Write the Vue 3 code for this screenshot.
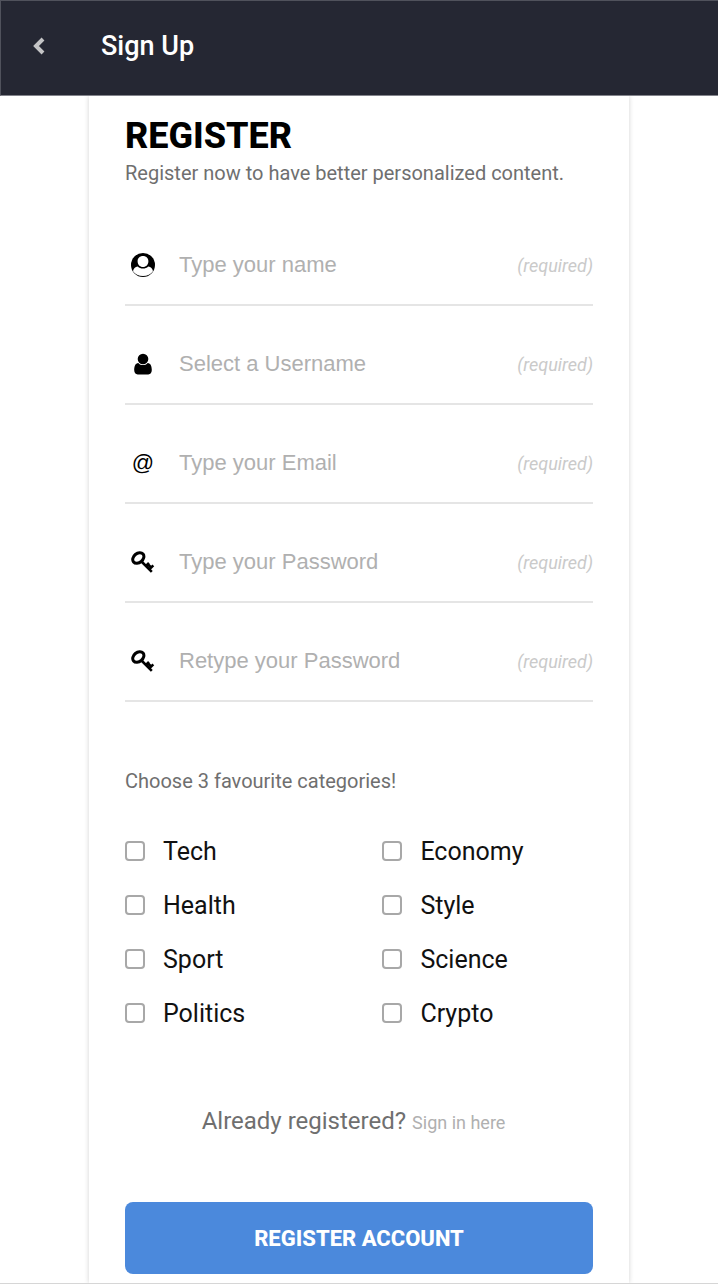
<script setup>
import { reactive } from 'vue'

const fields = [
  { id: 'name', icon: 'circle', placeholder: 'Type your name', type: 'text' },
  { id: 'username', icon: 'user', placeholder: 'Select a Username', type: 'text' },
  { id: 'email', icon: 'at', placeholder: 'Type your Email', type: 'email' },
  { id: 'password', icon: 'key', placeholder: 'Type your Password', type: 'password' },
  { id: 'password2', icon: 'key', placeholder: 'Retype your Password', type: 'password' },
]
const form = reactive({ name: '', username: '', email: '', password: '', password2: '' })
const categories = ['Tech', 'Economy', 'Health', 'Style', 'Sport', 'Science', 'Politics', 'Crypto']
</script>

<template>
  <div class="page">
    <header class="topbar">
      <button class="back" type="button" aria-label="Back">
        <svg viewBox="0 0 12 18" width="12" height="18"><path d="M10 2 3 9l7 7" fill="none" stroke="currentColor" stroke-width="4" /></svg>
      </button>
      <span class="title">Sign Up</span>
    </header>

    <main class="card">
      <form @submit.prevent>
        <h1>REGISTER</h1>
        <p class="note">Register now to have better personalized content.</p>

        <div class="fields">
          <div v-for="f in fields" :key="f.id" class="field">
            <label class="icon" :for="f.id" :aria-label="f.placeholder">
              <svg v-if="f.icon === 'circle'" viewBox="0 0 24 24" width="24" height="24">
                <circle cx="12" cy="12" r="12" />
                <path fill="#fff" d="M12 3C8.800 3 6.600 5.200 6.600 8.200c0 3.300 2.200 5.800 5.400 5.800s5.400-2.500 5.400-5.800C17.400 5.200 15.200 3 12 3zM6.800 13.400C4.100 13.600 2.400 15.600 2 18.200 4 21.200 7.700 23 12 23s8-1.800 10-4.800c-.4-2.600-2.100-4.600-4.800-4.800-1.300 1.400-3.100 2.200-5.200 2.200s-3.900-.8-5.200-2.200z" />
              </svg>
              <svg v-else-if="f.icon === 'user'" viewBox="0 0 18 22" width="18" height="22">
                <circle cx="9" cy="6" r="5.300" />
                <path d="M4.300 9.900c1.300 1.500 2.800 2.200 4.700 2.200s3.400-.7 4.700-2.200c3 .2 4.100 3.200 4.100 7.200 0 2.700-1.300 4.400-3.500 4.400H3.700C1.500 21.500.2 19.800.2 17.100c0-4 1.100-7 4.100-7.200z" />
              </svg>
              <span v-else-if="f.icon === 'at'">@</span>
              <svg v-else viewBox="0 0 24 24" width="24" height="24">
                <g fill="none" stroke="#000">
                  <ellipse cx="7.300" cy="8" rx="6.200" ry="4.600" stroke-width="3" transform="rotate(-40 7.300 8)" />
                  <path d="M10.500 11.500 20.800 21.800M15 16l3-3M18.300 19.300l4-4M16.800 14.200l3 3" stroke-width="2.600" />
                </g>
              </svg>
            </label>
            <input :id="f.id" v-model="form[f.id]" :type="f.type" :placeholder="f.placeholder" />
            <em>(required)</em>
          </div>
        </div>

        <p class="note">Choose 3 favourite categories!</p>
        <div class="categories">
          <label v-for="c in categories" :key="c"><input type="checkbox" :value="c" />{{ c }}</label>
        </div>

        <p class="signin">Already registered? <a href="#">Sign in here</a></p>
        <button class="submit" type="submit">REGISTER ACCOUNT</button>
      </form>
    </main>
  </div>
</template>

<style>
body {
  background: #fff;
}
</style>

<style scoped>
.page {
  box-sizing: border-box;
  min-height: 100vh;
  display: flex;
  flex-direction: column;
  font-family: Roboto, sans-serif;
  color: #111;
  border-bottom: 1px solid #d6d6d6;
}
.topbar {
  display: flex;
  align-items: center;
  box-sizing: border-box;
  height: 96px;
  padding: 0 32px 4px;
  background: #252733;
  border: 1px solid #50525c;
  border-right: 0;
  border-bottom-color: #82838b;
}
.back {
  display: flex;
  padding: 0;
  border: 0;
  background: none;
  color: #c4c4c6;
}
.title {
  margin-left: 56px;
  font-size: 27px;
  line-height: 36px;
  font-weight: 500;
  color: #fff;
}
.card {
  flex: 1;
  box-sizing: border-box;
  width: 100%;
  max-width: 540px;
  margin: 0 auto;
  padding: 20px 36px 9px;
  box-shadow: 0 0 5px rgba(0, 0, 0, 0.18);
  clip-path: inset(0 -8px);
}
h1 {
  margin: 0;
  font-size: 36px;
  line-height: 40px;
  font-weight: 800;
  color: #000;
}
.note {
  margin: 0;
  font-size: 20px;
  line-height: 34px;
  color: #6f6f6f;
}
.fields {
  margin: 17px 0 62px;
}
.field {
  display: flex;
  align-items: center;
  box-sizing: border-box;
  height: 99px;
  padding-top: 18px;
  border-bottom: 2px solid #e5e5e5;
}
.icon {
  display: flex;
  justify-content: center;
  width: 36px;
  font: 22px "Liberation Sans", sans-serif;
  color: #000;
}
.field input {
  flex: 1;
  min-width: 0;
  margin-left: 18px;
  padding: 0;
  border: 0;
  outline: 0;
  background: none;
  font: 22px "Liberation Sans", Arial, sans-serif;
  color: #111;
}
.field input::placeholder {
  color: #b0b0b0;
  opacity: 1;
}
.field em {
  padding-top: 2px;
  font-size: 18px;
  color: #cacaca;
}
.categories {
  display: grid;
  grid-template-columns: 55% 45%;
  margin-top: 26px;
}
.categories label {
  display: flex;
  align-items: center;
  height: 54px;
  font-size: 25px;
}
.categories input {
  appearance: none;
  box-sizing: border-box;
  width: 20px;
  height: 20px;
  margin: 0 18px 0 0;
  border: 2px solid #a8a8a8;
  border-radius: 4px;
  background: #fff;
}
.categories input:checked {
  background: #4b89dc;
}
.signin {
  margin: 63px 0 61px;
  padding-right: 11px;
  font-size: 24px;
  line-height: 36px;
  text-align: center;
  color: #6f6f6f;
}
.signin a {
  font-size: 18px;
  color: #b0b0b0;
  text-decoration: none;
}
.submit {
  display: block;
  width: 100%;
  height: 72px;
  padding: 0;
  border: 0;
  border-radius: 8px;
  background: #4b89dc;
  font: 800 22px Roboto, sans-serif;
  color: #fff;
}
</style>
